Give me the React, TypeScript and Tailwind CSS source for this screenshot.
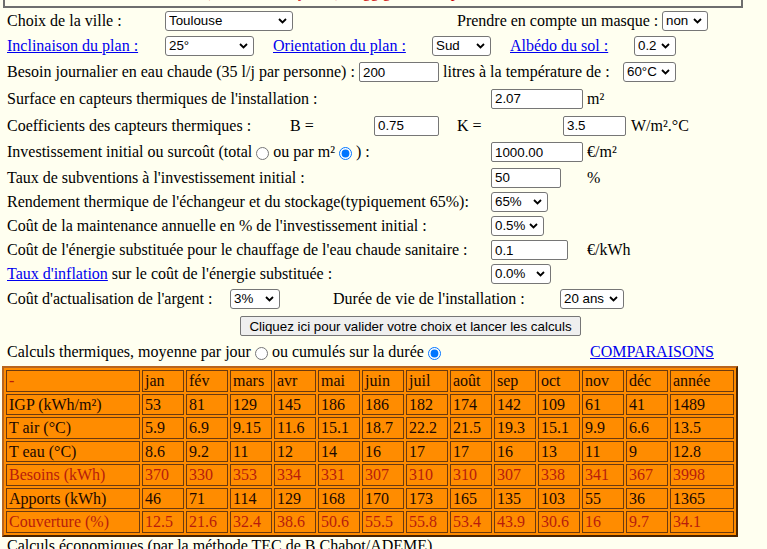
import React from 'react';

const sans = "font-['Liberation_Sans',Arial,sans-serif]";

const Chevron = () => (
  <svg width="9" height="6" viewBox="0 0 9 6" className="pointer-events-none absolute right-[6px] top-[7px]">
    <path d="M1 1l3.5 3.5L8 1" fill="none" stroke="#000" strokeWidth="1.8" />
  </svg>
);

const Sel = ({ w, v }: { w: string; v: string }) => (
  <span className={`relative inline-flex h-[20px] shrink-0 ${w}`}>
    <select
      defaultValue={v}
      className={`h-full w-full appearance-none rounded-[3px] border border-[#767676] bg-white pl-[3px] text-[13.33px] leading-[18px] text-black ${sans}`}
    >
      <option>{v}</option>
    </select>
    <Chevron />
  </span>
);

const Inp = ({ w, v }: { w: string; v: string }) => (
  <input
    defaultValue={v}
    className={`h-[20px] shrink-0 rounded-[2px] border border-[#767676] bg-white pl-[3px] text-[13.33px] text-black ${sans} ${w}`}
  />
);

const Radio = ({ on }: { on?: boolean }) => (
  <input type="radio" defaultChecked={on} className="mx-[4px] h-[13px] w-[13px] translate-y-[1px] accent-[#0075ff]" />
);

const Link = ({ children }: { children: React.ReactNode }) => (
  <a href="#" className="text-[#0000ee] underline">
    {children}
  </a>
);

const Row = ({ h, children }: { h: string; children: React.ReactNode }) => (
  <div className={`flex items-center whitespace-nowrap ${h}`}>{children}</div>
);

const months = ['jan', 'fév', 'mars', 'avr', 'mai', 'juin', 'juil', 'août', 'sep', 'oct', 'nov', 'déc'];

const rows: { label: string; red?: boolean; values: string[] }[] = [
  { label: 'IGP (kWh/m²)', values: ['53', '81', '129', '145', '186', '186', '182', '174', '142', '109', '61', '41', '1489'] },
  { label: 'T air (°C)', values: ['5.9', '6.9', '9.15', '11.6', '15.1', '18.7', '22.2', '21.5', '19.3', '15.1', '9.9', '6.6', '13.5'] },
  { label: 'T eau (°C)', values: ['8.6', '9.2', '11', '12', '14', '16', '17', '17', '16', '13', '11', '9', '12.8'] },
  { label: 'Besoins (kWh)', red: true, values: ['370', '330', '353', '334', '331', '307', '310', '310', '307', '338', '341', '367', '3998'] },
  { label: 'Apports (kWh)', values: ['46', '71', '114', '129', '168', '170', '173', '165', '135', '103', '55', '36', '1365'] },
  { label: 'Couverture (%)', red: true, values: ['12.5', '21.6', '32.4', '38.6', '50.6', '55.5', '55.8', '53.4', '43.9', '30.6', '16', '9.7', '34.1'] },
];

const cell = 'border border-[#6b3a10] px-[2px] py-[1px] leading-[17.5px] text-left font-normal align-middle';

export default function App() {
  return (
    <div className="min-h-screen w-full bg-[#fffff0] pl-[3px] font-['Liberation_Serif','Times_New_Roman',serif] text-[16px] text-black">
      {/* top box, mostly scrolled out */}
      <div className="h-[8px] w-[740px] overflow-hidden border-x-2 border-b-2 border-[#6e6e6e]">
        <p className="-mt-[17px] pl-[200px] text-[16px] leading-[18px] whitespace-nowrap text-[#cc0000]">
          (voir la notice jointe), sugg&nbsp;g&nbsp;&nbsp;&nbsp;&nbsp;&nbsp;&nbsp;&nbsp;&nbsp;&nbsp;&nbsp;&nbsp;&nbsp;&nbsp;&nbsp;&nbsp;p
        </p>
      </div>

      <div className="pl-[4px]">
        <Row h="h-[25px]">
          <span className="w-[158px] shrink-0">Choix de la ville :</span>
          <Sel w="w-[128px]" v="Toulouse" />
          <span className="ml-[164px] w-[205px] shrink-0">Prendre en compte un masque :</span>
          <Sel w="w-[46px]" v="non" />
        </Row>
        <Row h="h-[26px]">
          <span className="w-[158px] shrink-0">
            <Link>Inclinaison du plan :</Link>
          </span>
          <Sel w="w-[89px]" v="25°" />
          <span className="ml-[19px] w-[159px] shrink-0">
            <Link>Orientation du plan :</Link>
          </span>
          <Sel w="w-[59px]" v="Sud" />
          <span className="ml-[19px] w-[124px] shrink-0">
            <Link>Albédo du sol :</Link>
          </span>
          <Sel w="w-[42px]" v="0.2" />
        </Row>
        <Row h="h-[26px]">
          <span className="w-[352px] shrink-0">Besoin journalier en eau chaude (35 l/j par personne) :</span>
          <Inp w="w-[80px]" v="200" />
          <span className="ml-[4px] w-[180px] shrink-0">litres à la température de :</span>
          <Sel w="w-[53px]" v="60°C" />
        </Row>
        <Row h="h-[27px]">
          <span className="w-[484px] shrink-0">Surface en capteurs thermiques de l'installation :</span>
          <Inp w="w-[92px]" v="2.07" />
          <span className="ml-[4px]">m²</span>
        </Row>
        <Row h="h-[27px]">
          <span className="w-[283px] shrink-0">Coefficients des capteurs thermiques :</span>
          <span className="w-[84px] shrink-0">B =</span>
          <Inp w="w-[65px]" v="0.75" />
          <span className="ml-[18px] w-[106px] shrink-0">K =</span>
          <Inp w="w-[63px]" v="3.5" />
          <span className="ml-[5px]">W/m².°C</span>
        </Row>
        <Row h="h-[26px]">
          <span className="flex w-[484px] shrink-0 items-center">
            Investissement initial ou surcoût (total <Radio /> ou par m² <Radio on /> ) :
          </span>
          <Inp w="w-[92px]" v="1000.00" />
          <span className="ml-[4px]">€/m²</span>
        </Row>
        <Row h="h-[25px]">
          <span className="w-[484px] shrink-0">Taux de subventions à l'investissement initial :</span>
          <Inp w="w-[70px]" v="50" />
          <span className="ml-[26px]">%</span>
        </Row>
        <Row h="h-[24px]">
          <span className="w-[484px] shrink-0">Rendement thermique de l'échangeur et du stockage(typiquement 65%):</span>
          <Sel w="w-[57px]" v="65%" />
        </Row>
        <Row h="h-[24px]">
          <span className="w-[484px] shrink-0">Coût de la maintenance annuelle en % de l'investissement initial :</span>
          <Sel w="w-[53px]" v="0.5%" />
        </Row>
        <Row h="h-[24px]">
          <span className="w-[484px] shrink-0">Coût de l'énergie substituée pour le chauffage de l'eau chaude sanitaire :</span>
          <Inp w="w-[77px]" v="0.1" />
          <span className="ml-[19px]">€/kWh</span>
        </Row>
        <Row h="h-[24px]">
          <span className="w-[484px] shrink-0">
            <Link>Taux d'inflation</Link> sur le coût de l'énergie substituée :
          </span>
          <Sel w="w-[60px]" v="0.0%" />
        </Row>
        <Row h="h-[26px]">
          <span className="w-[223px] shrink-0">Coût d'actualisation de l'argent :</span>
          <Sel w="w-[50px]" v="3%" />
          <span className="ml-[53px] w-[227px] shrink-0">Durée de vie de l'installation :</span>
          <Sel w="w-[64px]" v="20 ans" />
        </Row>
        <Row h="h-[27px]">
          <button
            className={`ml-[233px] h-[20px] w-[341px] rounded-[2px] border border-[#767676] bg-[#efefef] text-[13.33px] text-black ${sans}`}
          >
            Cliquez ici pour valider votre choix et lancer les calculs
          </button>
        </Row>
        <Row h="h-[26px]">
          <span className="flex w-[583px] shrink-0 items-center">
            Calculs thermiques, moyenne par jour <Radio /> ou cumulés sur la durée <Radio on />
          </span>
          <Link>COMPARAISONS</Link>
        </Row>
      </div>

      <table className="mt-[1px] -ml-[1px] w-[736px] table-fixed border-separate border-spacing-[2px] border-2 border-t-[#b8651e] border-l-[#b8651e] border-r-[#4a2400] border-b-[#4a2400] bg-[#ff8c00] text-[#1a0800]">
        <thead>
          <tr>
            <th className={`${cell} w-[134px] text-[#b71c0c]`}>-</th>
            {months.map((m) => (
              <th key={m} className={`${cell} w-[42px]`}>
                {m}
              </th>
            ))}
            <th className={`${cell} w-[64px]`}>année</th>
          </tr>
        </thead>
        <tbody>
          {rows.map((r) => (
            <tr key={r.label} className={r.red ? 'text-[#b71c0c]' : ''}>
              <td className={cell}>{r.label}</td>
              {r.values.map((v, i) => (
                <td key={i} className={cell}>
                  {v}
                </td>
              ))}
            </tr>
          ))}
        </tbody>
      </table>
      <p className="pl-[4px] leading-[18px]">Calculs économiques (par la méthode TEC de B Chabot/ADEME)</p>
    </div>
  );
}
